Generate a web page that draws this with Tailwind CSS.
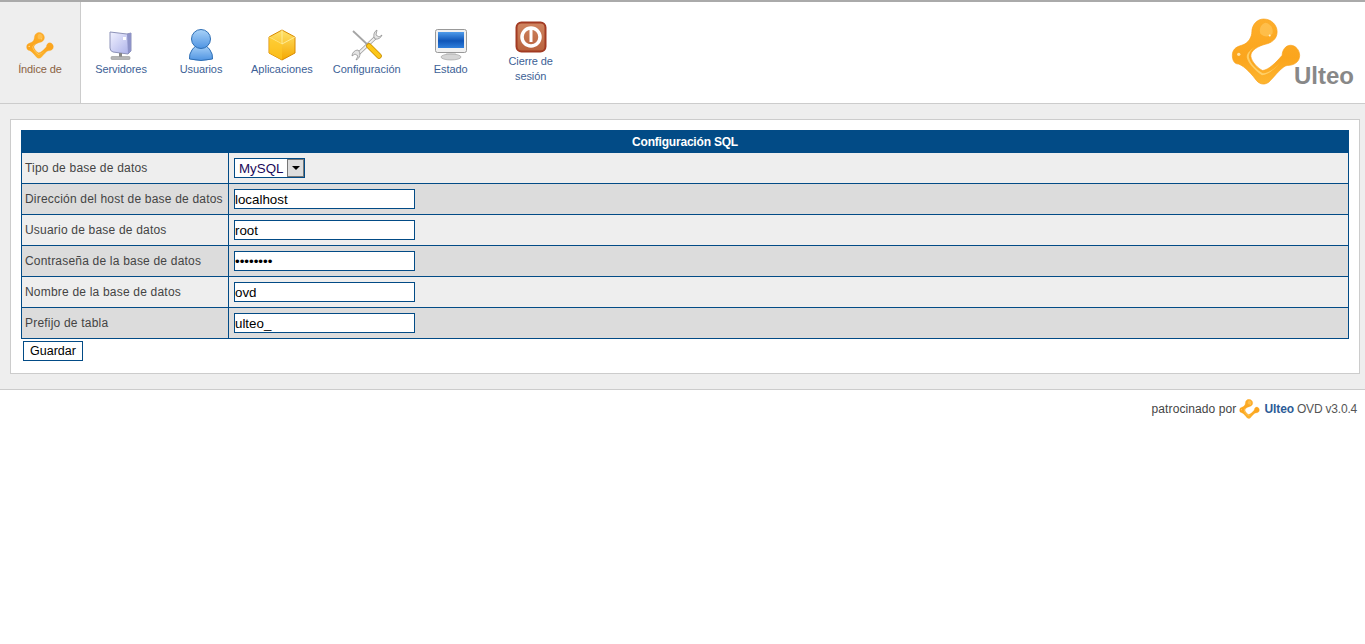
<!DOCTYPE html>
<html lang="es">
<head>
  <meta charset="UTF-8" />
  <title>Configuración SQL - Ulteo</title>
  <script src="https://cdn.jsdelivr.net/npm/@tailwindcss/browser@4"></script>
</head>
<body class="bg-white min-h-screen font-['Liberation_Sans',Arial,sans-serif] text-[#444]">

<!-- logo / gradients shared by the icons -->
<svg width="0" height="0" class="absolute">
  <defs>
    <linearGradient id="orange" x1="0" y1="0" x2="0" y2="1">
      <stop offset="0" stop-color="#fdae2b"/><stop offset="0.6" stop-color="#fba51d"/><stop offset="1" stop-color="#fdb52f"/>
    </linearGradient>
    <linearGradient id="srv" x1="0" y1="0" x2="1" y2="1">
      <stop offset="0" stop-color="#f1f2ff"/><stop offset="1" stop-color="#a9aee8"/>
    </linearGradient>
    <linearGradient id="usr" x1="0" y1="0" x2="0" y2="1">
      <stop offset="0" stop-color="#a9d2f8"/><stop offset="1" stop-color="#4f94e2"/>
    </linearGradient>
    <linearGradient id="cube" x1="0" y1="0" x2="0" y2="1">
      <stop offset="0" stop-color="#ffe26a"/><stop offset="1" stop-color="#f5a800"/>
    </linearGradient>
    <linearGradient id="scr" x1="0" y1="0" x2="0" y2="1">
      <stop offset="0" stop-color="#4f9bea"/><stop offset="0.55" stop-color="#0f55b8"/><stop offset="1" stop-color="#2f7fdc"/>
    </linearGradient>
    <linearGradient id="pwr" x1="0" y1="0" x2="0" y2="1">
      <stop offset="0" stop-color="#d08561"/><stop offset="1" stop-color="#b8623c"/>
    </linearGradient>
    <symbol id="ulteo" viewBox="93 54 208 202">
      <path d="M190 57 C213 57 230 75 230 95 C230 118 212 128 195 132 C175 137 150 150 152 168 C154 185 175 205 187 210 C205 208 225 188 245 165 C245 150 255 135 270 135 C285 135 297 150 297 165 C297 185 280 195 260 195 C245 197 225 225 205 245 C190 255 175 250 165 235 C150 215 125 190 110 190 C102 188 97 178 97 165 C97 150 105 140 125 135 C145 130 155 110 155 95 C155 75 170 57 190 57Z" fill="url(#orange)" stroke="#f9a11b" stroke-width="2"/>
      <path d="M195 68 C210 70 220 85 216 100 C208 112 190 112 180 100 C176 85 182 72 195 68Z" fill="#ffc65a" opacity=".7"/>
      <path d="M172 135 C150 148 138 160 140 172 C145 190 165 210 185 224 C210 222 232 195 250 175 C230 200 205 220 187 218 C170 208 150 190 146 170 C146 155 158 143 172 135Z" fill="#ffd777" opacity=".8"/>
      <circle cx="116" cy="162" r="5" fill="#ffe3a8"/>
      <circle cx="208" cy="106" r="3" fill="#fff3cf"/>
    </symbol>
  </defs>
</svg>

<!-- Header -->
<header class="flex justify-between h-[104px] border-t-2 border-b border-t-[#aaa] border-b-[#ccc]">
  <nav class="flex text-[11px] leading-[15px] text-[#3d5f96]">
    <a class="w-[81px] flex flex-col items-center justify-center gap-px bg-[#eee] border-r border-[#ccc] text-[#8a6242] tracking-[-0.1px]">
      <svg class="w-[28px] h-[27px] mt-[3px] mb-[2px]"><use href="#ulteo"/></svg>
      <span>Índice de</span>
    </a>
    <a class="min-w-[80px] px-[10px] flex flex-col items-center justify-center gap-px tracking-[-0.1px]">
      <svg class="w-8 h-8" viewBox="0 0 32 32">
        <path d="M5 3 L22 5 L26 4 L26 22 L23 25 L8 23 Q5 22 5 19Z" fill="url(#srv)" stroke="#8d92b8"/>
        <path d="M22 5 L26 4 L26 22 L23 25Z" fill="#8e93c8"/>
        <rect x="18" y="8" width="3" height="3" fill="#fff"/>
        <rect x="14" y="24" width="3" height="5" fill="#888"/>
        <rect x="6" y="27.5" width="19" height="3" rx="1" fill="#b5b5b5" stroke="#888" stroke-width=".5"/>
      </svg>
      <span>Servidores</span>
    </a>
    <a class="min-w-[80px] px-[10px] flex flex-col items-center justify-center gap-px tracking-[-0.1px]">
      <svg class="w-8 h-8" viewBox="0 0 32 32">
        <path d="M4.5 30 Q4 25 7 21 Q10 16 16 16 Q22 16 25 21 Q28 25 27.5 30 Q16 33 4.5 30Z" fill="url(#usr)" stroke="#2e6fb5"/>
        <circle cx="16" cy="10" r="9.5" fill="url(#usr)" stroke="#2e6fb5"/>
      </svg>
      <span>Usuarios</span>
    </a>
    <a class="min-w-[80px] px-[10px] flex flex-col items-center justify-center gap-px">
      <svg class="w-8 h-8" viewBox="0 0 32 32">
        <path d="M16 1 L29 8 L29 24 L16 31 L3 24 L3 8Z" fill="url(#cube)" stroke="#d98a00" stroke-linejoin="round"/>
        <path d="M16 1 L16 15 M3 8 L16 15 L29 8" fill="none" stroke="#fff2a8" stroke-width=".8"/>
        <path d="M16 15 L16 31 L3 24 L3 8Z" fill="#ffc926" opacity=".6"/>
      </svg>
      <span>Aplicaciones</span>
    </a>
    <a class="min-w-[80px] px-[10px] flex flex-col items-center justify-center gap-px">
      <svg class="w-8 h-8" viewBox="0 0 32 32">
        <path d="M25 8 L7 25" stroke="#999" stroke-width="3.6"/>
        <path d="M25 8 L7 25" stroke="#eee" stroke-width="2.2"/>
        <path d="M2 2 L18 17" stroke="#a5a5a5" stroke-width="1.8"/>
        <path d="M18 17 L28 27" stroke="#c98f00" stroke-width="5.6" stroke-linecap="round"/>
        <path d="M18 17 L28 27" stroke="#fcc719" stroke-width="4" stroke-linecap="round"/>
        <path d="M26 1 A6 6 0 0 0 24 10 A6 6 0 0 0 31 6 L28 8 L25 6Z" fill="#e4e4e4" stroke="#888" stroke-width=".7"/>
        <path d="M7 21 A6 6 0 0 0 1 27 L4 25 L7 27 L5 31 A6 6 0 0 0 7 21Z" fill="#e4e4e4" stroke="#888" stroke-width=".7"/>
      </svg>
      <span>Configuración</span>
    </a>
    <a class="min-w-[80px] px-[10px] flex flex-col items-center justify-center gap-px tracking-[-0.1px]">
      <svg class="w-8 h-8" viewBox="0 0 32 32">
        <path d="M12 22 L20 22 L22 28 L10 28Z" fill="#e2e2e2"/>
        <ellipse cx="16" cy="28" rx="10" ry="3" fill="#d5d5d5" stroke="#999" stroke-width=".6"/>
        <rect x=".5" y=".5" width="31" height="23" rx="2" fill="#f0f0f0" stroke="#999"/>
        <rect x="3" y="3" width="26" height="16" fill="url(#scr)"/>
      </svg>
      <span>Estado</span>
    </a>
    <a class="min-w-[80px] px-[10px] flex flex-col items-center justify-center gap-px text-center tracking-[-0.1px]">
      <svg class="w-8 h-8" viewBox="0 0 32 32">
        <rect x="1.5" y="1.5" width="29" height="29" rx="5" fill="url(#pwr)" stroke="#a23a22" stroke-width="2"/>
        <circle cx="16" cy="16" r="9" fill="none" stroke="#fff" stroke-width="3.5"/>
        <rect x="14.5" y="8" width="3" height="13" fill="#fff"/>
      </svg>
      <span class="w-[60px]">Cierre de sesión</span>
    </a>
  </nav>
  <div class="pr-[11px] pt-[16px] flex">
    <div class="relative w-[123px] h-[70px]">
      <svg class="absolute left-0 top-0 w-[70px] h-[68px]"><use href="#ulteo"/></svg>
      <span class="absolute right-0 top-[46px] text-[24px] leading-[24px] font-bold text-[#888]">Ulteo</span>
    </div>
  </div>
</header>

<!-- Content -->
<main class="bg-[#eee] h-[286px] border-b border-[#ccc] pt-[15px] pl-[10px] pr-[5px]">
  <div class="bg-white border border-[#ccc] h-[255px] pt-[10px] pl-[10px] pr-[10px]">
    <table class="w-[1328px] border-collapse text-[12px] tracking-[0.2px]">
      <tr class="h-[22px]">
        <th colspan="2" class="bg-[#024b86] text-white font-bold text-center border border-[#024b86] tracking-[-0.2px]">Configuración SQL</th>
      </tr>
      <tr class="h-[31px] bg-[#eee]">
        <td class="w-[207px] border border-[#024b86] pl-[3px]">Tipo de base de datos</td>
        <td class="border border-[#024b86] pl-[5px]">
          <div class="relative w-[71px] h-[20px]">
            <select class="appearance-none w-full h-full bg-white border border-[#024b86] pl-[4px] text-[13.33px] tracking-normal text-[#1a0a5a] rounded-none outline-none">
              <option>MySQL</option>
            </select>
            <span class="absolute right-px top-px w-[17px] h-[18px] bg-[#ddd] border border-[#777] flex items-center justify-center">
              <span class="border-x-[4px] border-x-transparent border-t-[4px] border-t-black"></span>
            </span>
          </div>
        </td>
      </tr>
      <tr class="h-[31px] bg-[#dcdcdc]">
        <td class="border border-[#024b86] pl-[3px]">Dirección del host de base de datos</td>
        <td class="border border-[#024b86] pl-[5px]"><input type="text" value="localhost" class="block w-[181px] h-[20px] bg-white border border-[#024b86] px-0 text-[13.33px] tracking-normal text-black rounded-none outline-none"></td>
      </tr>
      <tr class="h-[31px] bg-[#eee]">
        <td class="border border-[#024b86] pl-[3px]">Usuario de base de datos</td>
        <td class="border border-[#024b86] pl-[5px]"><input type="text" value="root" class="block w-[181px] h-[20px] bg-white border border-[#024b86] px-0 text-[13.33px] tracking-normal text-black rounded-none outline-none"></td>
      </tr>
      <tr class="h-[31px] bg-[#dcdcdc]">
        <td class="border border-[#024b86] pl-[3px]">Contraseña de la base de datos</td>
        <td class="border border-[#024b86] pl-[5px]"><input type="password" value="password" class="block w-[181px] h-[20px] bg-white border border-[#024b86] px-0 text-[13.33px] tracking-normal text-black rounded-none outline-none"></td>
      </tr>
      <tr class="h-[31px] bg-[#eee]">
        <td class="border border-[#024b86] pl-[3px]">Nombre de la base de datos</td>
        <td class="border border-[#024b86] pl-[5px]"><input type="text" value="ovd" class="block w-[181px] h-[20px] bg-white border border-[#024b86] px-0 text-[13.33px] tracking-normal text-black rounded-none outline-none"></td>
      </tr>
      <tr class="h-[31px] bg-[#dcdcdc]">
        <td class="border border-[#024b86] pl-[3px]">Prefijo de tabla</td>
        <td class="border border-[#024b86] pl-[5px]"><input type="text" value="ulteo_" class="block w-[181px] h-[20px] bg-white border border-[#024b86] px-0 text-[13.33px] tracking-normal text-black rounded-none outline-none"></td>
      </tr>
    </table>
    <button class="block mt-[2px] ml-[2px] w-[60px] h-[20px] bg-white border border-[#024b86] text-[12.5px] leading-[18px] text-black">Guardar</button>
  </div>
</main>

<!-- Footer -->
<footer class="flex justify-end items-center h-[38px] pr-[8px] text-[12px] text-[#444]">
  <span class="tracking-[0.1px]">patrocinado por</span>
  <svg class="w-[21px] h-[20px] ml-[3px] mr-[4px]"><use href="#ulteo"/></svg>
  <span class="font-bold text-[#2c5c97] tracking-[-0.1px]">Ulteo</span>
  <span class="ml-[3px] text-[#555] tracking-[-0.2px]">OVD v3.0.4</span>
</footer>

</body>
</html>
